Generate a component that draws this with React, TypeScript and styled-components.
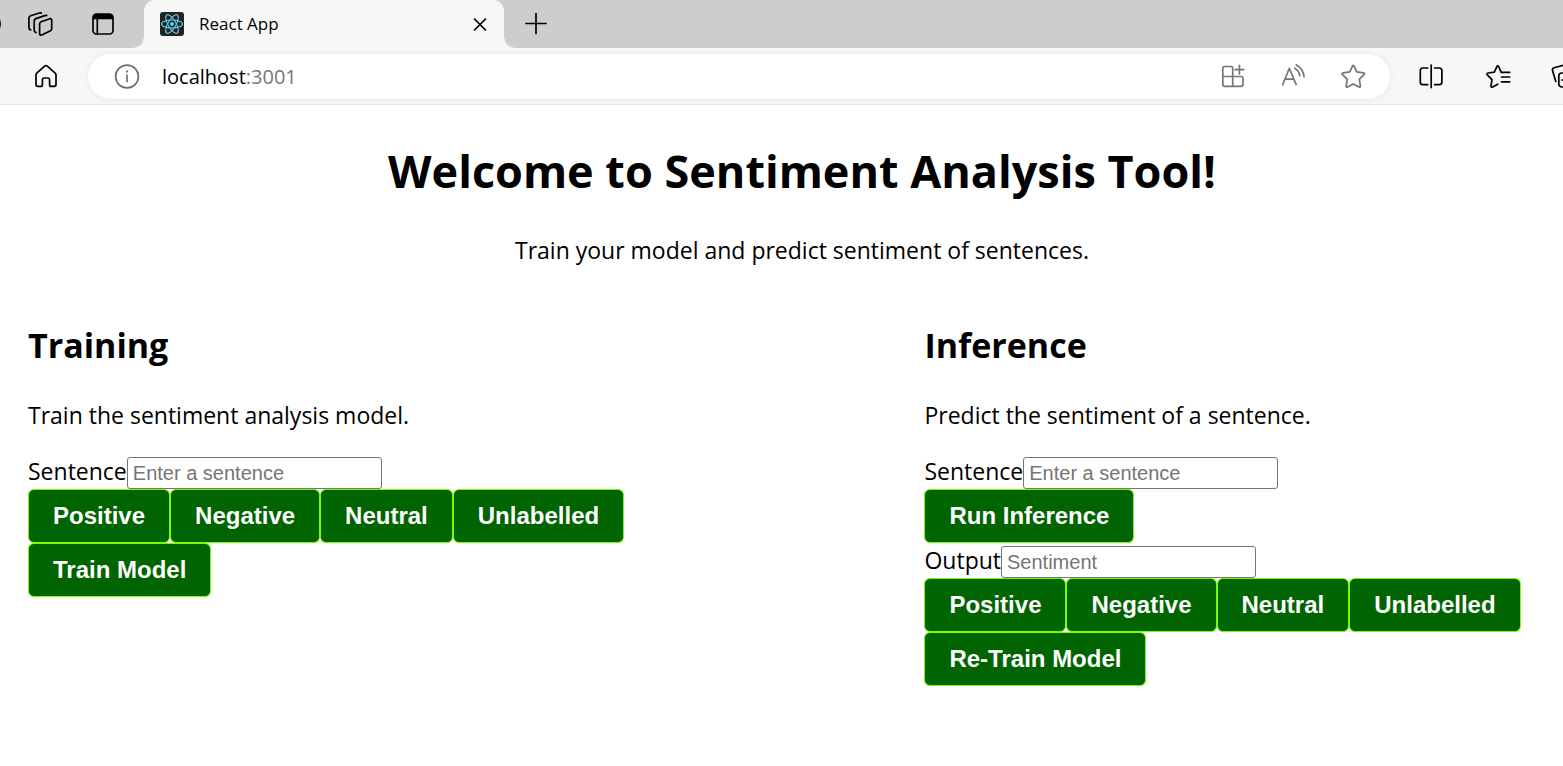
import React from 'react';
import styled, { createGlobalStyle } from 'styled-components';

const uiFont = `'Segoe UI', 'Open Sans', 'Noto Sans', sans-serif`;
const formFont = `Arial, 'Liberation Sans', sans-serif`;

const GlobalStyle = createGlobalStyle`
  * { box-sizing: border-box; }
  body {
    margin: 0;
    background: #ffffff;
    color: #000000;
    font-family: ${uiFont};
    overflow-x: hidden;
  }
`;

const TabStrip = styled.header`
  display: flex;
  height: 48px;
  background: #cdcdcd;
  overflow: hidden;
`;

const ProfileEdge = styled.svg`
  flex: none;
  width: 8px;
  height: 48px;
`;

const IconButton = styled.button<{ $width: number; $color?: string }>`
  display: flex;
  flex: none;
  align-items: center;
  justify-content: center;
  width: ${(p) => p.$width}px;
  padding: 0;
  border: 0;
  background: transparent;
  color: ${(p) => p.$color ?? '#000000'};
`;

const Glyph = styled.svg`
  flex: none;
  width: 28px;
  height: 28px;
  fill: none;
  stroke: currentColor;
  stroke-width: 1.7;
  stroke-linecap: round;
  stroke-linejoin: round;
`;

const Tab = styled.div`
  position: relative;
  display: flex;
  flex: none;
  align-items: center;
  width: 360px;
  margin-left: 10px;
  padding-left: 16px;
  border-radius: 11px 11px 0 0;
  background: #f7f7f7;

  &::before,
  &::after {
    content: '';
    position: absolute;
    bottom: 0;
    width: 10px;
    height: 10px;
  }
  &::before {
    right: 100%;
    background: radial-gradient(circle at 0 0, transparent 9px, #f7f7f7 10px);
  }
  &::after {
    left: 100%;
    background: radial-gradient(circle at 100% 0, transparent 9px, #f7f7f7 10px);
  }
`;

const Favicon = styled.svg`
  flex: none;
  width: 24px;
  height: 24px;
`;

const TabTitle = styled.span`
  flex: 1;
  margin-left: 15px;
  font-size: 17px;
  line-height: 24px;
`;

const Toolbar = styled.nav`
  display: flex;
  align-items: center;
  height: 57px;
  border-bottom: 1px solid #e9e9e9;
  background: #f7f7f7;
  overflow: hidden;
`;

const HomeSlot = styled.div`
  display: flex;
  flex: none;
  width: 88px;
  padding-left: 16px;
`;

const AddressBar = styled.div`
  display: flex;
  flex: 1;
  align-items: center;
  height: 45px;
  padding: 0 7px 0 8px;
  border-radius: 23px;
  background: #ffffff;
  box-shadow: 0 0 6px rgba(0, 0, 0, 0.08);
`;

const Address = styled.div`
  flex: 1;
  margin-left: 5px;
  padding-top: 2px;
  font-size: 20px;
  line-height: 28px;
`;

const Port = styled.span`
  color: #767676;
`;

const ToolbarActions = styled.div`
  display: flex;
  flex: none;
  width: 173px;
  padding-left: 7px;
  overflow: hidden;
`;

const Intro = styled.section`
  padding: 36px 0 0 41px;
  text-align: center;
`;

const Title = styled.h1`
  margin: 0;
  font-size: 45px;
  line-height: 60px;
`;

const Text = styled.p`
  margin: 0;
  font-size: 23px;
  line-height: 32px;
`;

const Tagline = styled(Text)`
  margin-top: 33px;
`;

const Columns = styled.main`
  display: grid;
  grid-template-columns: 584fr 416fr;
  padding: 55px 0 0 28px;
`;

const Panel = styled.section`
  display: flex;
  flex-direction: column;
  align-items: flex-start;
`;

const Heading = styled.h2`
  margin: 0 0 30px;
  font-size: 34px;
  line-height: 48px;
`;

const Form = styled.form`
  margin-top: 26px;
`;

const Field = styled.div<{ $gap?: number }>`
  display: flex;
  align-items: flex-start;
  height: 32px;
  margin-top: ${(p) => p.$gap ?? 0}px;
`;

const Label = styled.label`
  font-size: 23px;
  line-height: 28px;
`;

const TextInput = styled.input`
  width: 255px;
  height: 32px;
  margin: 0;
  padding: 0 5px;
  border: 1px solid #767676;
  border-radius: 3px;
  background: #ffffff;
  font-family: ${formFont};
  font-size: 20px;

  &::placeholder {
    color: #757575;
  }
`;

const ButtonRow = styled.div`
  display: flex;
`;

const ActionButton = styled.button`
  height: 54px;
  padding: 0 24px;
  border: 1px solid #7cfc00;
  border-radius: 6px;
  background: #006400;
  color: #ffffff;
  font-family: ${formFont};
  font-size: 24px;
  font-weight: 700;
  line-height: 28px;
  white-space: nowrap;
`;

const STAR =
  'M13.5 4.1Q14.3 2.6 15.1 4.1L17.8 9.9L24.5 10.9Q26.3 11.3 25 12.7L20.3 17.3L21.4 24Q21.5 25.7 20 25L14.3 21.9L8.6 25Q7.1 25.7 7.2 24L8.3 17.3L3.6 12.7Q2.3 11.3 4.1 10.9L10.8 9.9Z';

const labels = ['Positive', 'Negative', 'Neutral', 'Unlabelled'];

function LabelButtons() {
  return (
    <ButtonRow>
      {labels.map((label) => (
        <ActionButton key={label} type="button">
          {label}
        </ActionButton>
      ))}
    </ButtonRow>
  );
}

function BrowserTabs() {
  return (
    <TabStrip>
      <ProfileEdge viewBox="0 0 8 48" aria-hidden="true">
        <circle cx="-10" cy="24" r="11" fill="#111111" />
      </ProfileEdge>
      <IconButton $width={63} aria-label="Workspaces">
        <Glyph viewBox="0 0 28 28">
          <path d="M15.2 11.8L23.9 8.7Q25.7 8.3 25.7 10V19Q25.7 20.3 24.5 20.8L15.8 25Q13.6 25.6 13.6 23.5V14Q13.6 12.4 15.2 11.8Z" />
          <path d="M20.7 5.6Q20 5.2 18.8 5.6L9.8 8.6Q8.2 9.3 8.2 11V20.3Q8.2 22.2 10 22.6" />
          <path d="M15.3 3Q14.5 2.6 13.3 3L4.6 5.8Q2.9 6.5 2.9 8.2V17.5Q2.9 19.5 4.7 19.9" />
        </Glyph>
      </IconButton>
      <IconButton $width={63} aria-label="Tab actions">
        <Glyph viewBox="0 0 28 28">
          <rect x="4" y="4" width="20" height="20" rx="3.5" />
          <path d="M4 9.3V7.5Q4 4 7.5 4H20.5Q24 4 24 7.5V9.3Z" fill="currentColor" stroke="none" />
          <path d="M8.3 9V24" />
        </Glyph>
      </IconButton>
      <Tab>
        <Favicon viewBox="0 0 24 24" aria-hidden="true">
          <rect width="24" height="24" rx="3" fill="#222222" />
          <g fill="none" stroke="#5fd0ec" strokeWidth="1.1">
            <ellipse cx="12" cy="12" rx="10.5" ry="4" />
            <ellipse cx="12" cy="12" rx="10.5" ry="4" transform="rotate(60 12 12)" />
            <ellipse cx="12" cy="12" rx="10.5" ry="4" transform="rotate(120 12 12)" />
          </g>
          <circle cx="12" cy="12" r="2" fill="#5fd0ec" />
        </Favicon>
        <TabTitle>React App</TabTitle>
        <IconButton $width={48} aria-label="Close tab">
          <Glyph viewBox="0 0 28 28">
            <path d="M8.5 9L19.5 20M19.5 9L8.5 20" />
          </Glyph>
        </IconButton>
      </Tab>
      <IconButton $width={64} aria-label="New tab">
        <Glyph viewBox="0 0 28 28">
          <path d="M4 13.5H24M14 3.5V23.5" />
        </Glyph>
      </IconButton>
    </TabStrip>
  );
}

function BrowserToolbar() {
  return (
    <Toolbar>
      <HomeSlot>
        <IconButton $width={60} aria-label="Home">
          <Glyph viewBox="0 0 28 28">
            <path d="M12.7 4.2Q14 3.2 15.3 4.2L23 10.9Q24 11.8 24 13V22.5Q24 24.4 22.2 24.4H19.2Q17.6 24.4 17.6 22.7V18Q17.6 16 15.8 16H12.2Q10.4 16 10.4 18V22.7Q10.4 24.4 8.8 24.4H5.8Q4 24.4 4 22.5V13Q4 11.8 5 10.9Z" />
          </Glyph>
        </IconButton>
      </HomeSlot>
      <AddressBar>
        <IconButton $width={61} $color="#6e6e6e" aria-label="Site information">
          <Glyph viewBox="0 0 28 28">
            <circle cx="14" cy="14.5" r="11.4" />
            <path d="M14 13V19.5" />
            <circle cx="14" cy="9.6" r="1.1" fill="currentColor" stroke="none" />
          </Glyph>
        </IconButton>
        <Address>
          localhost<Port>:3001</Port>
        </Address>
        <IconButton $width={60} $color="#757575" aria-label="App available">
          <Glyph viewBox="0 0 28 28">
            <path d="M13.7 24.3V6.3Q13.7 4.5 12 4.5H5.8Q3.8 4.5 3.8 6.5V22.3Q3.8 24.3 5.8 24.3H22Q24 24.3 24 22.3V16.5Q24 14.5 22 14.5H3.8M20.4 3.4V12M16.2 7.7H24.7" />
          </Glyph>
        </IconButton>
        <IconButton $width={60} $color="#757575" aria-label="Read aloud">
          <Glyph viewBox="0 0 28 28">
            <path d="M3.7 22.7L10.3 6.3L17.2 22.7M6 17.2H14.9M15.8 6.2Q20 8.5 20.8 13.8M17.3 3Q24.3 6.5 25 14.8" />
          </Glyph>
        </IconButton>
        <IconButton $width={60} $color="#757575" aria-label="Add to favorites">
          <Glyph viewBox="0 0 28 28">
            <path d={STAR} />
          </Glyph>
        </IconButton>
      </AddressBar>
      <ToolbarActions>
        <IconButton $width={67} aria-label="Split screen">
          <Glyph viewBox="0 0 28 28">
            <path d="M14.2 3V25.6M10.7 6H6Q3.3 6 3.3 8.7V20Q3.3 22.7 6 22.7H10.7M17.7 6H22.2Q24.9 6 24.9 8.7V20Q24.9 22.7 22.2 22.7H17.7" />
          </Glyph>
        </IconButton>
        <IconButton $width={67} aria-label="Favorites">
          <Glyph viewBox="0 0 28 28">
            <path d="M17.2 10.3L14.7 4.6Q13.8 3 12.9 4.6L10.3 10.2L4.2 11Q2 11.4 3.5 13.1L8 17.6L7 23.8Q6.9 25.9 8.7 25L13.8 22.2M17.2 10.3H25.7M17.5 15H25.7M17.5 19.8H25.7" />
          </Glyph>
        </IconButton>
        <IconButton $width={67} aria-label="Collections">
          <Glyph viewBox="0 0 28 28">
            <path d="M4.8 19.5L1.5 8.6Q0.9 6.4 3 5.7L13 3Q15.2 2.5 15.8 4.6L16.5 7.5" />
            <rect x="7.8" y="11" width="15" height="14" rx="3" />
            <path d="M11 18H19.5M15.3 14V22" />
          </Glyph>
        </IconButton>
      </ToolbarActions>
    </Toolbar>
  );
}

export default function App() {
  return (
    <>
      <GlobalStyle />
      <BrowserTabs />
      <BrowserToolbar />
      <Intro>
        <Title>Welcome to Sentiment Analysis Tool!</Title>
        <Tagline>Train your model and predict sentiment of sentences.</Tagline>
      </Intro>
      <Columns>
        <Panel>
          <Heading>Training</Heading>
          <Text>Train the sentiment analysis model.</Text>
          <Form>
            <Field>
              <Label htmlFor="training-sentence">Sentence</Label>
              <TextInput id="training-sentence" placeholder="Enter a sentence" />
            </Field>
            <LabelButtons />
            <ActionButton type="button">Train Model</ActionButton>
          </Form>
        </Panel>
        <Panel>
          <Heading>Inference</Heading>
          <Text>Predict the sentiment of a sentence.</Text>
          <Form>
            <Field>
              <Label htmlFor="inference-sentence">Sentence</Label>
              <TextInput id="inference-sentence" placeholder="Enter a sentence" />
            </Field>
            <ButtonRow>
              <ActionButton type="button">Run Inference</ActionButton>
            </ButtonRow>
            <Field $gap={3}>
              <Label htmlFor="inference-output">Output</Label>
              <TextInput id="inference-output" placeholder="Sentiment" />
            </Field>
            <LabelButtons />
            <ActionButton type="button">Re-Train Model</ActionButton>
          </Form>
        </Panel>
      </Columns>
    </>
  );
}
